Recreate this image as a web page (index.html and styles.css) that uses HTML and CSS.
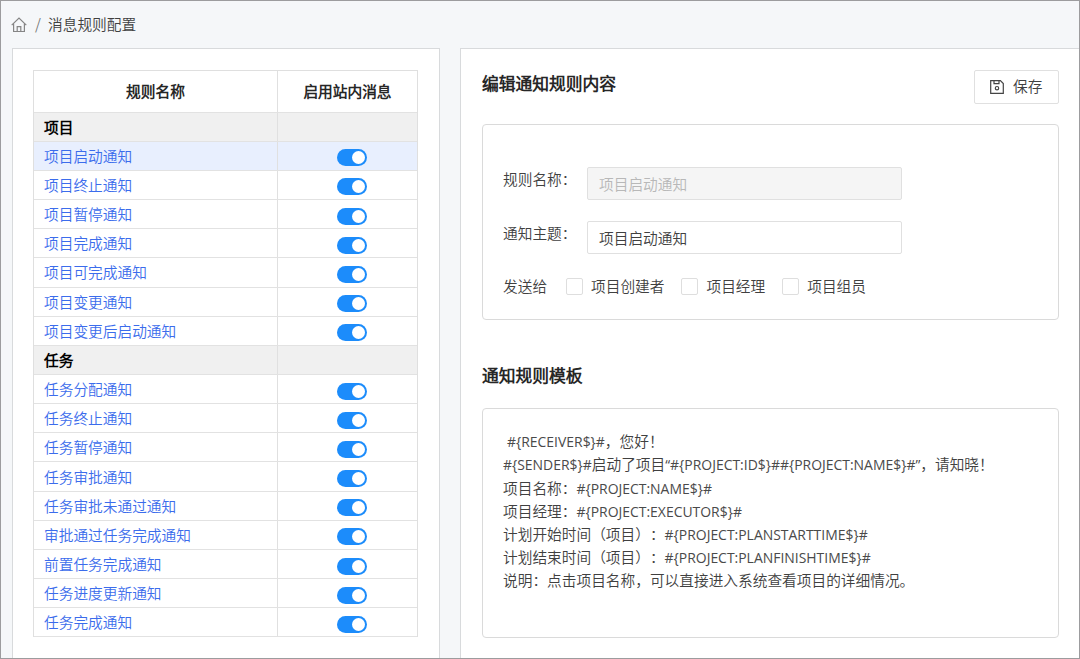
FILE: index.html
```html
<!DOCTYPE html>
<html lang="zh-CN">
<head>
<meta charset="utf-8">
<title>消息规则配置</title>
<link rel="stylesheet" href="styles.css">
</head>
<body>
<div class="app">
  <nav class="breadcrumb">
    <svg class="home-icon" viewBox="0 0 16 16" fill="none" stroke="#858585" stroke-width="1.2"><path d="M.7 8.1 8 1l7.3 7.1M2.6 6.8v7.7h10.8V6.8M6.2 14.4V9.6h3.6v4.8"/></svg>
    <span class="slash">/</span>
    <span>消息规则配置</span>
  </nav>
  <main class="columns">
    <section class="panel rules">
      <div class="table">
        <div class="row head"><div>规则名称</div><div>启用站内消息</div></div>
        <div class="row group"><div>项目</div><div></div></div>
        <div class="row active"><div>项目启动通知</div><div><i class="switch"></i></div></div>
        <div class="row"><div>项目终止通知</div><div><i class="switch"></i></div></div>
        <div class="row"><div>项目暂停通知</div><div><i class="switch"></i></div></div>
        <div class="row"><div>项目完成通知</div><div><i class="switch"></i></div></div>
        <div class="row"><div>项目可完成通知</div><div><i class="switch"></i></div></div>
        <div class="row"><div>项目变更通知</div><div><i class="switch"></i></div></div>
        <div class="row"><div>项目变更后启动通知</div><div><i class="switch"></i></div></div>
        <div class="row group"><div>任务</div><div></div></div>
        <div class="row"><div>任务分配通知</div><div><i class="switch"></i></div></div>
        <div class="row"><div>任务终止通知</div><div><i class="switch"></i></div></div>
        <div class="row"><div>任务暂停通知</div><div><i class="switch"></i></div></div>
        <div class="row"><div>任务审批通知</div><div><i class="switch"></i></div></div>
        <div class="row"><div>任务审批未通过通知</div><div><i class="switch"></i></div></div>
        <div class="row"><div>审批通过任务完成通知</div><div><i class="switch"></i></div></div>
        <div class="row"><div>前置任务完成通知</div><div><i class="switch"></i></div></div>
        <div class="row"><div>任务进度更新通知</div><div><i class="switch"></i></div></div>
        <div class="row"><div>任务完成通知</div><div><i class="switch"></i></div></div>
      </div>
    </section>
    <section class="panel editor">
      <header class="editor-head">
        <h2>编辑通知规则内容</h2>
        <button class="save" type="button">
          <svg class="save-icon" viewBox="0 0 14 14" fill="none" stroke="#444" stroke-width="1.2"><path d="M.7.7h9.7l2.9 2.9v9.7H.7zM4 .9v2.7h5V.9"/><circle cx="7" cy="8.2" r="1.7"/></svg>
          <span>保存</span>
        </button>
      </header>
      <div class="card form">
        <div class="field"><label>规则名称：</label><div class="input disabled">项目启动通知</div></div>
        <div class="field"><label>通知主题：</label><div class="input">项目启动通知</div></div>
        <div class="send">
          <span class="send-label">发送给</span>
          <label class="check"><i></i>项目创建者</label>
          <label class="check"><i></i>项目经理</label>
          <label class="check"><i></i>项目组员</label>
        </div>
      </div>
      <h2 class="template-title">通知规则模板</h2>
      <div class="card template">
        <p class="indent"><span class="var">#{RECEIVER$}#</span>，您好！</p>
        <p><span class="var">#{SENDER$}#</span>启动了项目<span class="var">“#{PROJECT:ID$}##{PROJECT:NAME$}#”</span>，请知晓！</p>
        <p>项目名称：<span class="var">#{PROJECT:NAME$}#</span></p>
        <p>项目经理：<span class="var">#{PROJECT:EXECUTOR$}#</span></p>
        <p>计划开始时间（项目）：<span class="var">#{PROJECT:PLANSTARTTIME$}#</span></p>
        <p>计划结束时间（项目）：<span class="var">#{PROJECT:PLANFINISHTIME$}#</span></p>
        <p>说明：点击项目名称，可以直接进入系统查看项目的详细情况。</p>
      </div>
    </section>
  </main>
</div>
</body>
</html>
```
FILE: styles.css
```css
* { box-sizing: border-box; margin: 0; padding: 0; }
body {
  font-family: "Noto Sans CJK SC DemiLight", "Noto Sans CJK SC", sans-serif;
  font-size: 14.7px;
  font-weight: 350;
  line-height: 22px;
  color: #404040;
  text-spacing-trim: space-all;
}
.app {
  display: flex;
  flex-direction: column;
  width: 1080px;
  height: 659px;
  overflow: hidden;
  border: 1px solid #9c9c9e;
  background: #f5f7f9;
}
.breadcrumb {
  display: flex;
  align-items: center;
  flex: none;
  height: 47px;
  padding: 0 0 0 10px;
}
.breadcrumb span { padding-bottom: 1px; }
.home-icon { width: 16px; height: 16px; margin-right: 8px; }
.slash { width: 13px; color: #777; font-size: 15px; }
.columns { display: flex; flex: 1; gap: 20px; padding-left: 11px; min-height: 0; }
.panel { background: #fff; border: 1px solid #d8dadc; border-bottom: 0; }
.rules { width: 428px; flex: none; padding: 21px 20px 0; }
.editor { flex: 1; border-right: 0; padding: 20px 20px 0 21px; }

.table { width: 385px; border: 1px solid #dfdfdf; border-bottom: 0; }
.row { display: grid; grid-template-columns: 243px 1fr; height: 29.17px; border-bottom: 1px solid #e2e2e2; color: #3b6cec; }
.row > div { display: flex; align-items: center; padding: 0 0 0 10px; }
.row > div + div { border-left: 1px solid #e0e0e0; justify-content: center; padding: 4px 0 0 8px; }
.row.head { height: 41.6px; color: #262626; font-weight: 700; }
.row.head > div { justify-content: center; padding: 0; }
.row.group { background: #f0f0f0; color: #000; font-weight: 700; }
.row.active { background: #e8effe; }
.switch { width: 30px; height: 17px; border-radius: 9px; background: #1c8cfb; padding: 2px; display: flex; justify-content: flex-end; }
.switch::before { content: ""; width: 13px; height: 13px; border-radius: 50%; background: #fff; }

h2 { font-size: 16.75px; font-weight: 700; line-height: 28px; color: #262626; }
.editor-head { display: flex; justify-content: space-between; height: 55px; }
.save {
  display: flex;
  align-items: center;
  gap: 9px;
  width: 85px;
  height: 34px;
  margin-top: 1px;
  padding: 0 0 0 15px;
  border: 1px solid #e0e0e0;
  border-radius: 2px;
  background: #fff;
  color: #404040;
  font: inherit;
}
.save-icon { width: 14px; height: 14px; }
.save span { padding-bottom: 2px; }
.card { border: 1px solid #dadada; border-radius: 4px; }
.form { height: 196px; padding: 42px 20px 0; }
.field { display: flex; height: 54px; }
.field label { width: 84px; padding-top: 1px; }
.input { width: 315px; height: 33px; border: 1px solid #e0e0e0; border-radius: 2px; padding: 5px 11px 0; }
.input.disabled { background: #f5f5f5; color: #b8b8b8; }
.send { display: flex; align-items: center; height: 22px; }
.send-label { width: 63px; }
.check { display: flex; align-items: center; margin-right: 17px; }
.check i { width: 17px; height: 17px; margin-right: 8px; border: 1px solid #dedede; border-radius: 2px; }
.template-title { margin: 41px 0 19px; }
.template { height: 230px; padding: 20.4px 20px 0; line-height: 23.1px; }
.template p { white-space: nowrap; height: 23.1px; }
.template .indent { padding-left: 4px; }
.var { font-family: "Open Sans", "Noto Sans", sans-serif; font-size: 13.95px; font-weight: 400; color: #4a4a4a; }
```
